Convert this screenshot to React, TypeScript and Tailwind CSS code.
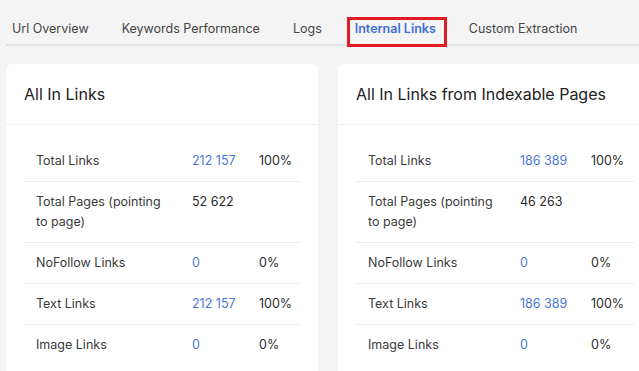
import React from "react";

type Row = { label: string; value: string; pct?: string; link?: boolean };

const tabs = ["Url Overview", "Keywords Performance", "Logs", "Internal Links", "Custom Extraction"];

const leftRows: Row[] = [
  { label: "Total Links", value: "212 157", pct: "100%", link: true },
  { label: "Total Pages (pointing to page)", value: "52 622" },
  { label: "NoFollow Links", value: "0", pct: "0%", link: true },
  { label: "Text Links", value: "212 157", pct: "100%", link: true },
  { label: "Image Links", value: "0", pct: "0%", link: true },
];

const rightRows: Row[] = [
  { label: "Total Links", value: "186 389", pct: "100%", link: true },
  { label: "Total Pages (pointing to page)", value: "46 263" },
  { label: "NoFollow Links", value: "0", pct: "0%", link: true },
  { label: "Text Links", value: "186 389", pct: "100%", link: true },
  { label: "Image Links", value: "0", pct: "0%", link: true },
];

const LinksCard = ({
  title,
  rows,
  labelCol,
  valueCol,
}: {
  title: string;
  rows: Row[];
  labelCol: string;
  valueCol: string;
}) => (
  <div className="w-[312px] shrink-0 rounded-md bg-white pb-[40px]">
    <div className="border-b border-[#efefef] px-[18px] py-[18px] text-[16px] leading-[24px] text-[#222]">{title}</div>
    <div className="pl-[18px] pr-[16px] pt-[16px]">
      {rows.map((r, i) => (
        <div
          key={r.label}
          className={`flex text-[12.5px] leading-[20px] py-[10px] ${i < rows.length - 1 ? "border-b border-[#eeeeee]" : ""}`}
        >
          <div className={`${labelCol} shrink-0 pl-[12px] pr-[18px] text-[#3a3a3a]`}>{r.label}</div>
          <div className={`${valueCol} shrink-0 ${r.link ? "text-[#4a78d4]" : "text-[#2a2a2a]"}`}>{r.value}</div>
          <div className="text-[#2a2a2a]">{r.pct ?? ""}</div>
        </div>
      ))}
    </div>
  </div>
);

export default function App() {
  return (
    <div
      className="h-[371px] w-[639px] overflow-hidden bg-[#f4f4f4]"
      style={{ fontFamily: "Inter, 'Noto Sans', sans-serif" }}
    >
      <div className="ml-[6px] flex gap-[33px] border-b-2 border-[#dfe2e5] pl-[6px] pt-[19px] pb-[5px] text-[12.5px] leading-[20px] text-[#444]">
        {tabs.map((t) =>
          t === "Internal Links" ? (
            <span key={t} className="relative font-semibold text-[#3d6fd9]">
              {t}
              <span className="absolute -left-[8px] -right-[11px] -top-[2px] -bottom-[8px] border-[3px] border-[#e01b24]" />
            </span>
          ) : (
            <span key={t} className="whitespace-nowrap">
              {t}
            </span>
          )
        )}
      </div>
      <div className="mt-[18px] flex gap-[20px] pl-[6px]">
        <LinksCard title="All In Links" rows={leftRows} labelCol="w-[168px]" valueCol="w-[67px]" />
        <LinksCard title="All In Links from Indexable Pages" rows={rightRows} labelCol="w-[164px]" valueCol="w-[71px]" />
      </div>
    </div>
  );
}
